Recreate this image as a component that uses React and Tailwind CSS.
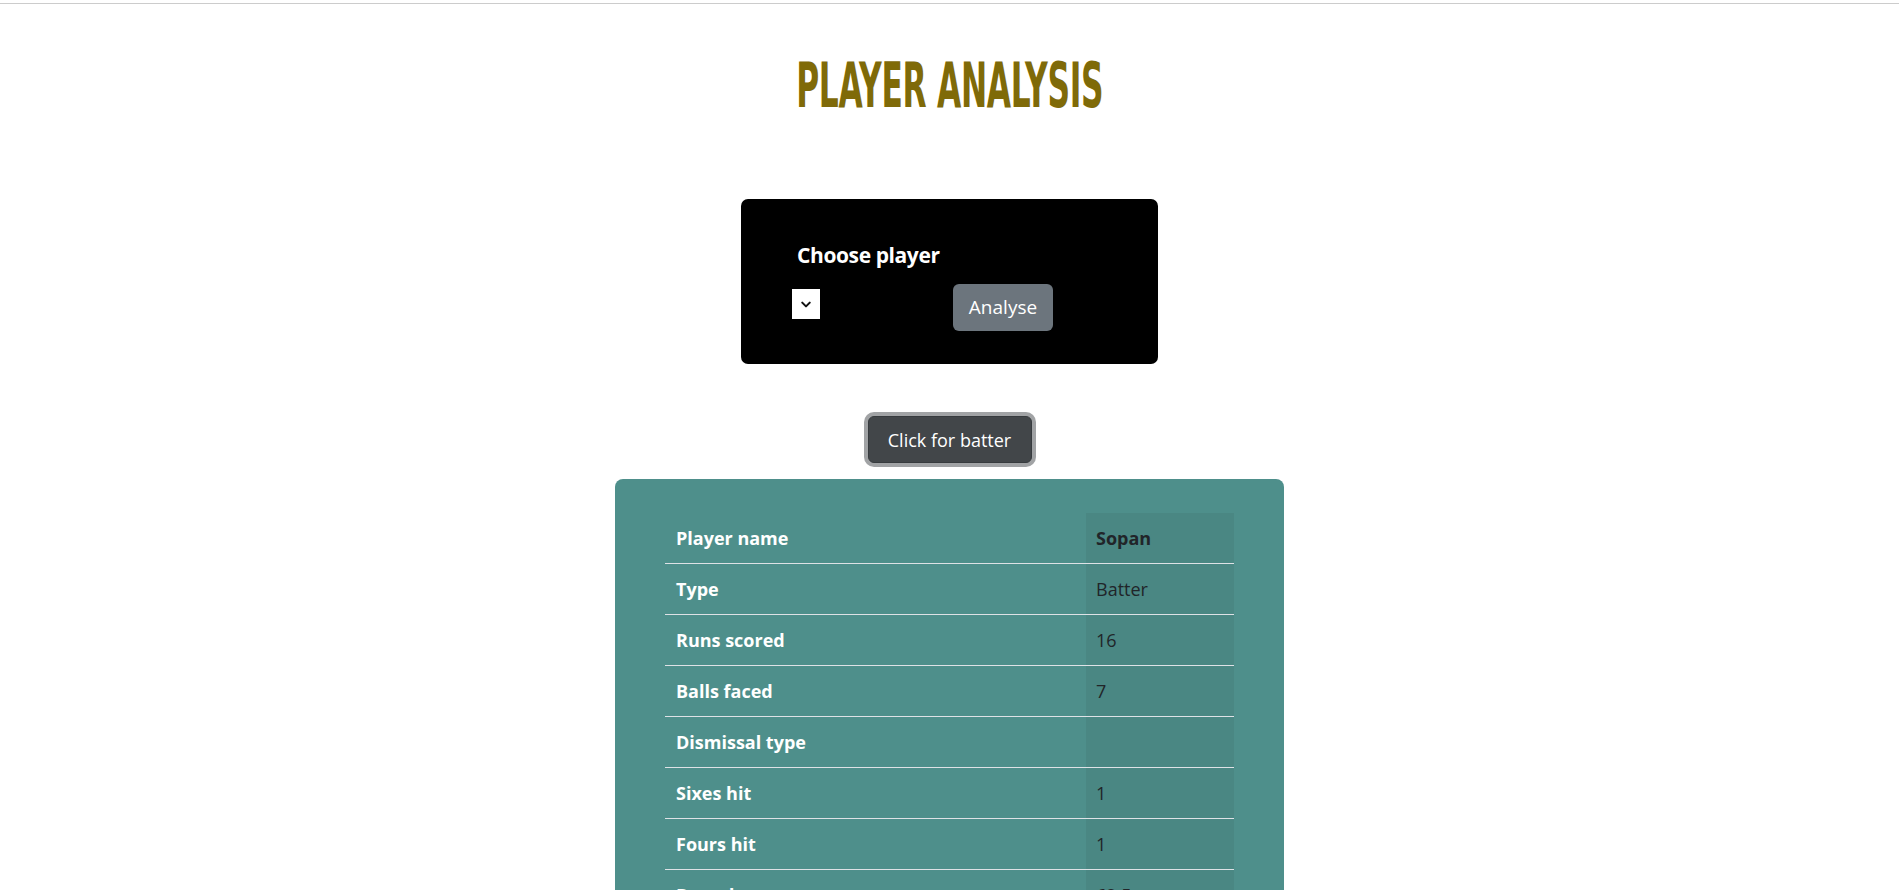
import React from 'react';

const ROWS = [
  { label: 'Player name', value: 'Sopan', strong: true },
  { label: 'Type', value: 'Batter' },
  { label: 'Runs scored', value: '16' },
  { label: 'Balls faced', value: '7' },
  { label: 'Dismissal type', value: '' },
  { label: 'Sixes hit', value: '1' },
  { label: 'Fours hit', value: '1' },
  { label: 'Boundary percentage', value: '62.5' },
  { label: 'Strike rate', value: '228.57' },
];

const Chevron = () => (
  <svg width="12" height="9" viewBox="0 0 16 12" fill="none" stroke="#111" strokeWidth="2.8" strokeLinecap="round" strokeLinejoin="round">
    <path d="M3 3.5l5 5 5-5" />
  </svg>
);

const App = () => {
  return (
    <div className="min-h-screen bg-white font-['Open_Sans','Noto_Sans',sans-serif]">
      <div className="h-[3px]" />
      <div className="border-t border-[#cccccc]" />

      {/* Title */}
      <div className="flex justify-center pt-[51px]">
        <h1 className="inline-block origin-center scale-x-[0.58] scale-y-[1.04] text-[60px] font-bold uppercase leading-none tracking-[-0.5px] text-[#7f6a08] font-['Liberation_Sans_Narrow','DejaVu_Sans_Condensed','Liberation_Sans',sans-serif]">
          Player Analysis
        </h1>
      </div>

      {/* Choose player form */}
      <div className="mx-auto mt-[84px] h-[165px] w-[417px] rounded-[7px] bg-black pl-[51px] pt-[42px]">
        <div className="ml-[5px] text-[21px] font-bold leading-[29px] tracking-[-0.4px] text-white">Choose player</div>
        <div className="mt-[14px] flex items-start">
          <div className="mt-[5px] flex h-[30px] w-[28px] items-center justify-center bg-white">
            <Chevron />
          </div>
          <button className="ml-[133px] h-[47px] w-[100px] rounded-[6px] bg-[#6c757d] text-[19px] leading-none text-white">
            Analyse
          </button>
        </div>
      </div>

      {/* Toggle */}
      <div className="mt-[52px] flex justify-center">
        <button className="h-[47px] w-[164px] whitespace-nowrap rounded-[6px] border border-[#373b3e] bg-[#424649] text-[18px] leading-none text-white ring-4 ring-[#a1a3a5]">
          Click for batter
        </button>
      </div>

      {/* Stats table */}
      <div className="mx-auto mt-[16px] w-[669px] rounded-t-[8px] bg-[#4e8f8b] px-[50px] pt-[34px] pb-[40px]">
        <table className="w-full border-collapse">
          <tbody>
            {ROWS.map((r) => (
              <tr key={r.label} className="border-b border-[#dee2e6]">
                <th className="w-[421px] px-[11px] py-[12px] text-left text-[18px] font-bold leading-[26px] text-white">
                  {r.label}
                </th>
                <td className={`bg-black/[0.05] px-[10px] py-[12px] text-[18px] leading-[26px] text-[#212529] ${r.strong ? 'font-bold' : 'font-normal'}`}>
                  {r.value}
                </td>
              </tr>
            ))}
          </tbody>
        </table>
      </div>
    </div>
  );
};

export default App;
